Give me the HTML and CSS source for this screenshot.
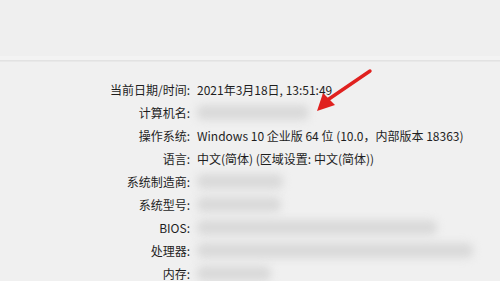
FILE: index.html
```html
<!DOCTYPE html>
<html lang="zh-CN">
<head>
<meta charset="utf-8">
<link rel="stylesheet" href="styles.css">
</head>
<body>
<div class="page">
  <div class="header"></div>
  <div class="info">
    <div class="label">当前日期/时间:</div><div class="value">2021年3月18日, 13:51:49</div>
    <div class="label">计算机名:</div><div class="value"><span class="blur" style="width:112px"></span></div>
    <div class="label">操作系统:</div><div class="value">Windows 10 企业版 64 位 (10.0，内部版本 18363)</div>
    <div class="label">语言:</div><div class="value">中文(简体) (区域设置: 中文(简体))</div>
    <div class="label">系统制造商:</div><div class="value"><span class="blur" style="width:86px"></span></div>
    <div class="label">系统型号:</div><div class="value"><span class="blur" style="width:84px"></span></div>
    <div class="label">BIOS:</div><div class="value"><span class="blur" style="width:240px"></span></div>
    <div class="label">处理器:</div><div class="value"><span class="blur" style="width:276px"></span></div>
    <div class="label">内存:</div><div class="value"><span class="blur" style="width:74px"></span></div>
  </div>
  <svg class="arrow" width="70" height="50" viewBox="0 0 70 50">
    <path d="M66 3 L22 33" stroke="#e0211f" stroke-width="3.4" stroke-linecap="round" fill="none"/>
    <path d="M13 43 L19 25 L31 37 Z" fill="#e0211f"/>
  </svg>
</div>
</body>
</html>
```
FILE: styles.css
```css
html, body {
  margin: 0;
  padding: 0;
  background: #f0f0f0;
}
.page {
  position: relative;
  width: 500px;
  height: 281px;
  overflow: hidden;
  font-family: "Noto Sans CJK SC", "Noto Sans", sans-serif;
  font-size: 12px;
  color: #1e1e1e;
}
.header {
  height: 56px;
  background: #efefef;
  border-bottom: 4px solid #f3f3f3;
  box-shadow: 0 1px 0 #e2e2e2, 0 2px 0 #e8e8e8;
}
.info {
  display: grid;
  grid-template-columns: 190px 1fr;
  column-gap: 7px;
  grid-auto-rows: 23px;
  align-items: center;
  padding-top: 18px;
}
.label {
  text-align: right;
  white-space: nowrap;
}
.value {
  white-space: nowrap;
  display: flex;
  align-items: center;
}
.blur {
  display: block;
  height: 15px;
  background: #d9d9d9;
  border-radius: 6px;
  filter: blur(4.5px);
}
.arrow {
  position: absolute;
  left: 304px;
  top: 68px;
}
```
